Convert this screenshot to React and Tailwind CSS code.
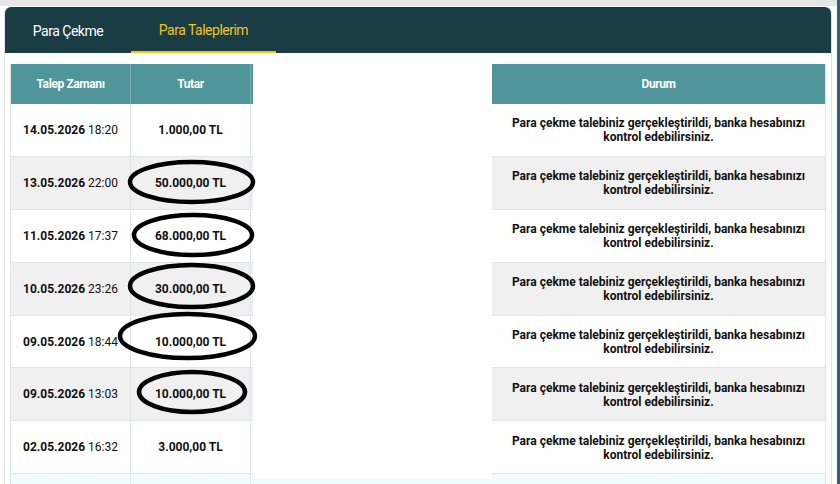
import React from "react";

const rows = [
  { d: "14.05.2026", t: "18:20", a: "1.000,00 TL", bg: "bg-white" },
  { d: "13.05.2026", t: "22:00", a: "50.000,00 TL", bg: "bg-[#f0f0f0]" },
  { d: "11.05.2026", t: "17:37", a: "68.000,00 TL", bg: "bg-white" },
  { d: "10.05.2026", t: "23:26", a: "30.000,00 TL", bg: "bg-[#f0f0f0]" },
  { d: "09.05.2026", t: "18:44", a: "10.000,00 TL", bg: "bg-white" },
  { d: "09.05.2026", t: "13:03", a: "10.000,00 TL", bg: "bg-[#f0f0f0]" },
  { d: "02.05.2026", t: "16:32", a: "3.000,00 TL", bg: "bg-white" },
];

export default function App() {
  return (
    <div
      className="relative w-[840px] h-[484px] overflow-hidden bg-white flex"
      style={{ fontFamily: "Roboto, 'Liberation Sans', sans-serif" }}
    >
      <div className="flex-1 flex flex-col">
        <div className="h-[6px] bg-[#e6e6e6] shrink-0" />
        <div className="mt-[1px] ml-[4px] mr-[5px] flex-1 flex flex-col border-l border-r border-[#e2e2e2] rounded-t-[6px]">
          <div className="h-[46px] bg-[#1a3c45] rounded-t-[6px] flex items-stretch shrink-0">
            <div className="w-[126px] flex items-center justify-center text-white text-[14px] tracking-[-0.5px] pt-[3px]">
              Para Çekme
            </div>
            <div className="w-[145px] flex items-center justify-center text-[#f6c512] text-[14px] tracking-[-0.5px] border-b-[2px] border-[#f6c512] pt-[3px]">
              Para Taleplerim
            </div>
          </div>
          <div className="pt-[11px] px-[5px]">
            <div className="border-l border-r border-[#dde6e8]">
              <div className="flex h-[40px] bg-[#4f9599] text-white text-[12px] font-bold tracking-[-0.4px]">
                <div className="w-[120px] flex items-center justify-center border-r border-[#78b0b3]">Talep Zamanı</div>
                <div className="w-[120px] flex items-center justify-center border-r border-[#78b0b3]">Tutar</div>
                <div className="w-[241px] flex items-center justify-center">Hesap</div>
                <div className="flex-1 flex items-center justify-center">Durum</div>
              </div>
              {rows.map((r, i) => (
                <div key={i} className={`flex h-[52.9px] border-b border-[#dde6e8] text-[12px] text-[#111] ${r.bg}`}>
                  <div className="w-[120px] flex items-center pl-[12px] border-r border-[#dde6e8]">
                    <span className="font-bold">{r.d}</span>
                    <span className="ml-[3px]">{r.t}</span>
                  </div>
                  <div className="w-[120px] flex items-center justify-center font-bold border-r border-[#dde6e8]">{r.a}</div>
                  <div className="w-[241px]" />
                  <div className="flex-1 flex items-center justify-center text-center font-bold leading-[14px] px-[10px] pt-[1px]">
                    <span>Para çekme talebiniz gerçekleştirildi, banka hesabınızı<br />kontrol edebilirsiniz.</span>
                  </div>
                </div>
              ))}
              <div className="flex h-[20px] bg-[#effdfe]">
                <div className="w-[120px] border-r border-[#dde6e8]" />
                <div className="w-[120px] border-r border-[#dde6e8]" />
                <div className="flex-1" />
              </div>
            </div>
          </div>
        </div>
      </div>
      <div className="w-[3px] bg-[#2b6470] shrink-0" />

      <div className="absolute left-[253px] top-[64px] w-[239px] h-[415px] bg-white" />

      <svg className="absolute left-0 top-0 pointer-events-none" width="840" height="484">
        <g fill="none" stroke="#000" strokeWidth="4.5">
          <ellipse cx="191.5" cy="182" rx="61.5" ry="20" />
          <ellipse cx="193" cy="235" rx="59" ry="20" />
          <ellipse cx="191.5" cy="286" rx="61.5" ry="21" />
          <ellipse cx="187.5" cy="336" rx="67.5" ry="22" />
          <ellipse cx="192" cy="392" rx="53" ry="20" />
        </g>
      </svg>
    </div>
  );
}
